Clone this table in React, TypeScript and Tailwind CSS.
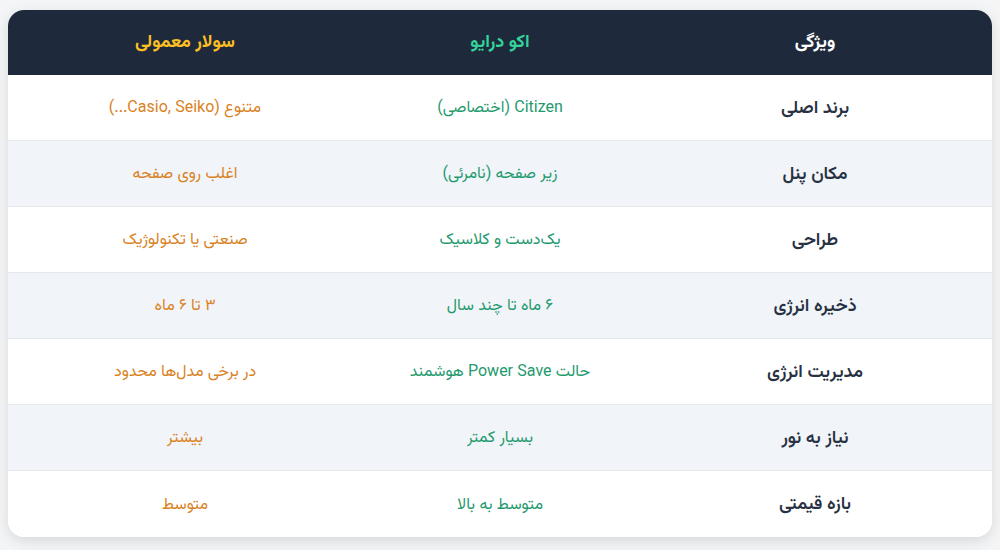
import React from "react";

interface Row {
  feature: string;
  eco: string;
  solar: string;
}

const rows: Row[] = [
  { feature: "برند اصلی", eco: "Citizen (اختصاصی)", solar: "متنوع (Casio, Seiko...)" },
  { feature: "مکان پنل", eco: "زیر صفحه (نامرئی)", solar: "اغلب روی صفحه" },
  { feature: "طراحی", eco: "یک‌دست و کلاسیک", solar: "صنعتی یا تکنولوژیک" },
  { feature: "ذخیره انرژی", eco: "۶ ماه تا چند سال", solar: "۳ تا ۶ ماه" },
  { feature: "مدیریت انرژی", eco: "حالت Power Save هوشمند", solar: "در برخی مدل‌ها محدود" },
  { feature: "نیاز به نور", eco: "بسیار کمتر", solar: "بیشتر" },
  { feature: "بازه قیمتی", eco: "متوسط به بالا", solar: "متوسط" },
];

const font = "font-['Vazirmatn','Roboto','DejaVu_Sans',sans-serif]";

const App = () => {
  return (
    <div className={`min-h-[550px] w-full bg-[#f4f5f7] px-2 pt-[10px] ${font}`}>
      <div dir="rtl" className="overflow-hidden rounded-2xl bg-white shadow-[0_4px_14px_rgba(0,0,0,0.12)]">
        {/* Header */}
        <div className="grid h-[65px] grid-cols-[354px_276px_354px] items-center bg-[#1e293b] pt-[2px] text-[18px] font-bold">
          <div className="text-center text-white">ویژگی</div>
          <div className="text-center text-[#34d399]">اکو درایو</div>
          <div className="text-center text-[#fbbf24]">سولار معمولی</div>
        </div>

        {/* Rows */}
        {rows.map((row, i) => (
          <div
            key={row.feature}
            className={`grid h-[66px] grid-cols-[354px_276px_354px] items-center pt-[3px] ${
              i % 2 === 1 ? "bg-[#f1f4f8]" : "bg-white"
            } ${i < rows.length - 1 ? "border-b border-[#e5e7eb]" : ""}`}
          >
            <div className="text-center text-[18px] font-semibold text-[#273142]">{row.feature}</div>
            <div className="text-center text-[16px] text-[#1f9a6e]">{row.eco}</div>
            <div className="text-center text-[16px] text-[#d9821f]">{row.solar}</div>
          </div>
        ))}
      </div>
    </div>
  );
};

export default App;
